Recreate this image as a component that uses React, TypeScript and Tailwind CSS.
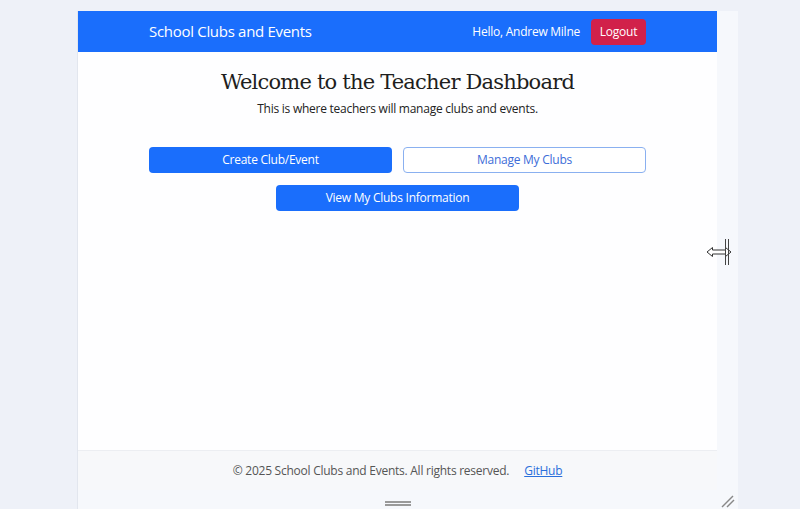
import React from "react";

const sans = { fontFamily: '"Open Sans", "Noto Sans", sans-serif' };

const buttonBase = "w-[243px] h-[26px] rounded-[4px] text-[12px] tracking-[-0.25px] flex items-center justify-center";

export default function App() {
    return (
        <div className="relative w-[800px] h-[509px] bg-[#eef1f8] overflow-hidden" style={sans}>
            <div className="flex pt-[11px] pl-[77px] h-full">
                <div className="w-[640px] flex flex-col border-l border-[#e2e6ee]">
                    <nav className="h-[41px] bg-[#1a6efc] flex items-center justify-between px-[71px] shrink-0">
                        <span className="text-white text-[15px] tracking-[-0.3px]">School Clubs and Events</span>
                        <div className="flex items-center gap-[11px]">
                            <span className="text-white text-[12px] tracking-[-0.25px]">Hello, Andrew Milne</span>
                            <button className="h-[26px] w-[55px] rounded-[4px] bg-[#d1214a] text-white text-[12px] tracking-[-0.25px]">Logout</button>
                        </div>
                    </nav>
                    <main className="h-[398px] bg-[#fefeff] flex flex-col items-center pt-[14px] shrink-0">
                        <h1 className="text-[21px] text-[#1e1e1e] leading-[32px] tracking-[-0.8px]" style={{fontFamily: '"DejaVu Serif", "Liberation Serif", serif'}}>
                            Welcome to the Teacher Dashboard
                        </h1>
                        <p className="text-[12px] tracking-[-0.25px] text-[#222] mt-[2px]">This is where teachers will manage clubs and events.</p>
                        <div className="flex gap-[11px] mt-[29px]">
                            <button className={`${buttonBase} bg-[#1a6efc] text-white`}>Create Club/Event</button>
                            <button className={`${buttonBase} bg-white border border-[#8ab0f0] text-[#3d6dd8]`}>Manage My Clubs</button>
                        </div>
                        <button className={`${buttonBase} bg-[#1a6efc] text-white mt-[12px]`}>View My Clubs Information</button>
                    </main>
                    <footer className="h-[40px] bg-[#f7f8fa] border-t border-[#eceef2] flex items-center justify-center gap-[15px] text-[12px] tracking-[-0.25px] shrink-0">
                        <span className="text-[#555]">© 2025 School Clubs and Events. All rights reserved.</span>
                        <a className="text-[#2a6fdb] underline">GitHub</a>
                    </footer>
                    <div className="flex-1 bg-[#f6f8fc] flex justify-center pt-[11px]">
                        <div className="flex flex-col gap-[1px] ml-[1px]">
                            <div className="w-[26px] h-[2px] bg-[#9a9a9a]"/>
                            <div className="w-[26px] h-[2px] bg-[#9a9a9a]"/>
                        </div>
                    </div>
                </div>
                <div className="w-[21px] bg-[#f6f8fc] relative">
                    <svg className="absolute left-[4px] bottom-[1px]" width="14" height="14" viewBox="0 0 14 14">
                        <line x1="1" y1="13" x2="12" y2="2" stroke="#888" strokeWidth="1.5"/>
                        <line x1="6" y1="13" x2="13" y2="6" stroke="#888" strokeWidth="1.5"/>
                    </svg>
                </div>
            </div>
            <svg className="absolute left-[706px] top-[238px]" width="27" height="28" viewBox="0 0 27 28">
                <path d="M1 14 L6.5 9.5 L6.5 12 L19.5 12 L19.5 9.5 L25 14 L19.5 18.5 L19.5 16 L6.5 16 L6.5 18.5 Z" fill="#fff" stroke="#333" strokeWidth="1"/>
                <line x1="19.5" y1="1" x2="19.5" y2="27" stroke="#444" strokeWidth="1"/>
                <line x1="22.5" y1="1" x2="22.5" y2="27" stroke="#444" strokeWidth="1"/>
            </svg>
        </div>
    );
}
